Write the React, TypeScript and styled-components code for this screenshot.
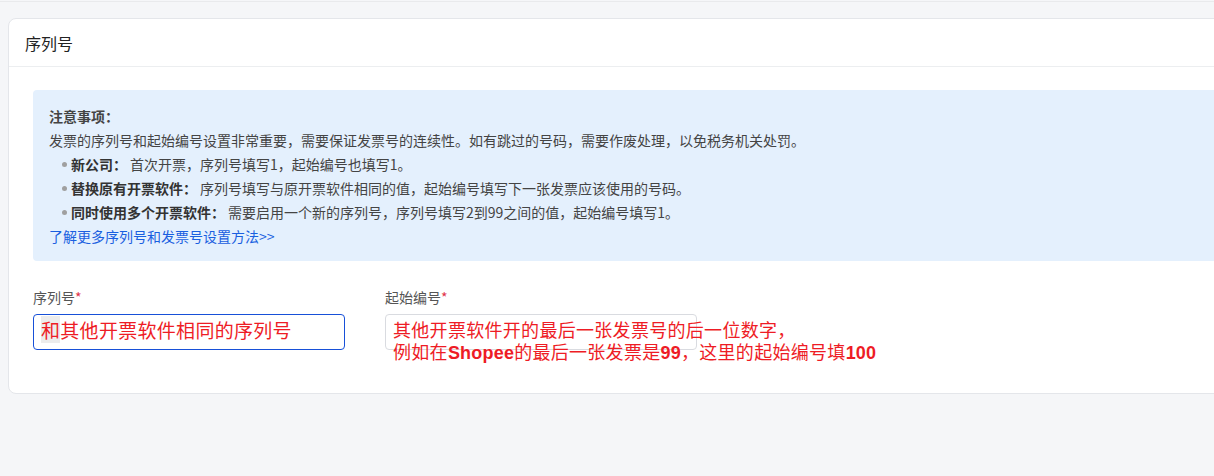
import React from "react";
import styled, { createGlobalStyle } from "styled-components";

const Global = createGlobalStyle`
  html, body { margin: 0; padding: 0; background: #f5f6f8; overflow: hidden; }
  body { font-family: "Noto Sans CJK SC", "Noto Sans", "Liberation Sans", sans-serif; }
`;

const Page = styled.div`
  margin-top: 1px;
  border-top: 1px solid #e9eaec;
  padding: 16px 0 40px 8px;
  min-height: 458px;
  box-sizing: border-box;
`;

const Card = styled.section`
  width: 1240px;
  background: #fff;
  border: 1px solid #e4e6ea;
  border-radius: 8px;
  box-sizing: border-box;
`;

const CardHeader = styled.header`
  height: 47px;
  display: flex;
  align-items: center;
  padding-left: 16px;
  font-size: 16px;
  color: #222;
  border-bottom: 1px solid #eceef0;
`;

const CardBody = styled.div`
  padding: 23px 24px 43px 24px;
`;

const Notice = styled.div`
  background: #e4f0fd;
  border-radius: 4px;
  padding: 14px 16px 13px 16px;
  font-size: 14px;
  line-height: 24px;
  color: #444;
`;

const NoticeTitle = styled.div`
  font-weight: 700;
  color: #444;
`;

const List = styled.ul`
  list-style: none;
  margin: 0;
  padding: 0;
`;

const Item = styled.li`
  position: relative;
  padding-left: 22px;
  &::before {
    content: "";
    position: absolute;
    left: 13px;
    top: 10px;
    width: 5px;
    height: 5px;
    border-radius: 50%;
    background: #a0a0a0;
  }
`;

const Strong = styled.b`
  font-weight: 700;
  color: #333;
  margin-right: 3px;
`;

const Link = styled.a`
  color: #1a5fe0;
  text-decoration: none;
`;

const Form = styled.div`
  display: flex;
  gap: 40px;
  margin-top: 26px;
`;

const Field = styled.div`
  display: flex;
  flex-direction: column;
  gap: 7px;
  position: relative;
`;

const Label = styled.label`
  font-size: 14px;
  line-height: 20px;
  color: #555;
  & > span { color: #e0334a; }
`;

const Input = styled.div<{ $focus?: boolean }>`
  width: 312px;
  height: 36px;
  box-sizing: border-box;
  border: 1px solid ${(p) => (p.$focus ? "#1750d8" : "#d9dbe0")};
  border-radius: 4px;
  background: #fff;
`;

const Note = styled.div<{ $size: number; $top: number }>`
  position: absolute;
  left: 8px;
  top: ${(p) => p.$top}px;
  color: #ee1c25;
  font-size: ${(p) => p.$size}px;
  line-height: 22px;
  white-space: nowrap;
  letter-spacing: 0.3px;
  & b { font-family: "Liberation Sans", sans-serif; font-weight: 700; letter-spacing: 0.2px; }
`;

const Hl = styled.span`
  background: #ececec;
`;

export default function App() {
  return (
    <>
      <Global />
      <Page>
        <Card>
          <CardHeader>序列号</CardHeader>
          <CardBody>
            <Notice>
              <NoticeTitle>注意事项：</NoticeTitle>
              <div>发票的序列号和起始编号设置非常重要，需要保证发票号的连续性。如有跳过的号码，需要作废处理，以免税务机关处罚。</div>
              <List>
                <Item><Strong>新公司：</Strong>首次开票，序列号填写1，起始编号也填写1。</Item>
                <Item><Strong>替换原有开票软件：</Strong>序列号填写与原开票软件相同的值，起始编号填写下一张发票应该使用的号码。</Item>
                <Item><Strong>同时使用多个开票软件：</Strong>需要启用一个新的序列号，序列号填写2到99之间的值，起始编号填写1。</Item>
              </List>
              <Link href="#">了解更多序列号和发票号设置方法&gt;&gt;</Link>
            </Notice>
            <Form>
              <Field>
                <Label>序列号<span>*</span></Label>
                <Input $focus />
                <Note $size={19} $top={32}><Hl>和</Hl>其他开票软件相同的序列号</Note>
              </Field>
              <Field>
                <Label>起始编号<span>*</span></Label>
                <Input />
                <Note $size={18} $top={31}>
                  其他开票软件开的最后一张发票号的后一位数字，
                  <br />
                  例如在<b>Shopee</b>的最后一张发票是<b>99</b>，这里的起始编号填<b>100</b>
                </Note>
              </Field>
            </Form>
          </CardBody>
        </Card>
      </Page>
    </>
  );
}
